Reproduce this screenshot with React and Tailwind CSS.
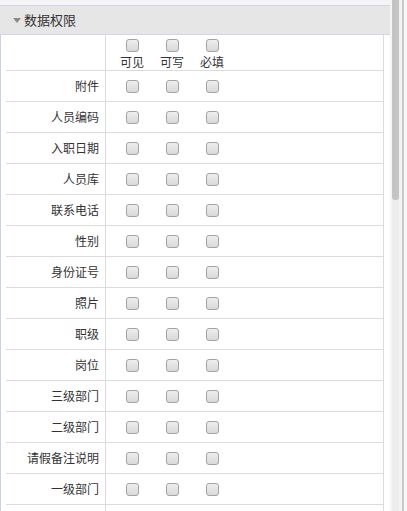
import React from 'react';

const fields = [
  '附件',
  '人员编码',
  '入职日期',
  '人员库',
  '联系电话',
  '性别',
  '身份证号',
  '照片',
  '职级',
  '岗位',
  '三级部门',
  '二级部门',
  '请假备注说明',
  '一级部门',
];

const Box = () => (
  <span className="block w-[13px] h-[13px] rounded-[3px] border border-[#a3a3a3] bg-gradient-to-b from-[#eeeeee] to-[#d9d9d9]" />
);

const BoxCell = () => (
  <div className="w-10 flex justify-center">
    <Box />
  </div>
);

const App = () => {
  return (
    <div
      className="w-[407px] h-[511px] overflow-hidden bg-[#f4f4f4] flex text-[#333]"
      style={{ fontFamily: '"Noto Sans CJK SC", "Liberation Sans", sans-serif' }}
    >
      <div className="w-[390px] pt-[5px] flex flex-col">
        <div className="shrink-0 h-[30px] border-y border-[#d4d2ec] bg-[#e6e6e6] flex items-center pl-[13px] text-[13px]">
          <span className="w-0 h-0 border-l-[4px] border-r-[4px] border-t-[5px] border-l-transparent border-r-transparent border-t-[#8a8a8a] mr-[3px]" />
          数据权限
        </div>
        <div className="flex-1 min-h-0 overflow-hidden bg-white border-l border-[#c9d2e2] pl-[5px] pr-[6px]">
          <div className="border-r border-[#dcdcdc] min-h-full">
            <div className="flex h-[36px] border-b border-[#dcdcdc]">
              <div className="w-[100px] border-r border-[#dcdcdc]" />
              <div className="flex flex-col pl-[6px] pt-[4px]">
                <div className="flex">
                  <BoxCell />
                  <BoxCell />
                  <BoxCell />
                </div>
                <div className="flex text-[12px] leading-[16px] mt-[2px]">
                  <div className="w-10 text-center">可见</div>
                  <div className="w-10 text-center">可写</div>
                  <div className="w-10 text-center">必填</div>
                </div>
              </div>
            </div>
            {fields.map((f) => (
              <div key={f} className="flex h-[31px] border-b border-[#dcdcdc]">
                <div className="w-[100px] border-r border-[#dcdcdc] flex items-center justify-end pr-[6px] text-[12px]">
                  {f}
                </div>
                <div className="flex items-center pl-[6px]">
                  <BoxCell />
                  <BoxCell />
                  <BoxCell />
                </div>
              </div>
            ))}
            <div className="flex h-[31px]">
              <div className="w-[100px] border-r border-[#dcdcdc]" />
            </div>
          </div>
        </div>
      </div>
      <div className="w-[17px] flex pl-[2px]">
        <div className="w-[7px] bg-[#ededed] flex flex-col">
          <div className="h-[200px] bg-[#c4c4c4] rounded-b-[3px]" />
        </div>
        <div className="w-[3px] bg-[#f2f2f2]" />
        <div className="w-[2px] bg-[#c9c9c9]" />
        <div className="flex-1 bg-[#f7f7f7]" />
      </div>
    </div>
  );
};

export default App;
